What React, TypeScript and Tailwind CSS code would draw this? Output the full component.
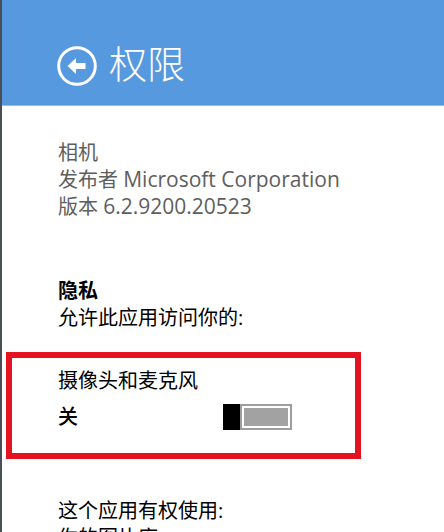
export default function App() {
  const font = { fontFamily: '"Open Sans", "Noto Sans CJK SC", sans-serif' };

  return (
    <div
      className="h-[532px] w-[444px] overflow-hidden border-l-2 border-[#4a4f57] bg-white"
      style={font}
    >
      <header className="flex h-[106px] items-start border-b border-[#8cc0f0] bg-[#5699de] pl-[55px] pt-[46px]">
        <div className="flex h-[40px] items-center gap-[12px]">
          <svg width="40" height="40" viewBox="0 0 40 40" aria-hidden>
            <circle cx="20" cy="20" r="18.3" fill="none" stroke="#fff" strokeWidth="3" />
            <path d="M10.5 20 L19 12 L19 17 L28.5 17 L28.5 23 L19 23 L19 28 Z" fill="#fff" />
          </svg>
          <h1 className="mb-[6px] text-[38px] font-light leading-[38px] text-white">权限</h1>
        </div>
      </header>

      <main className="text-[20px] leading-[27px]">
        <section className="pl-[56px] pt-[33px] text-[#5e5e5e]">
          <p>相机</p>
          <p>
            发布者 <span className="text-[21px]">Microsoft Corporation</span>
          </p>
          <p>
            版本 <span className="text-[21px]">6.2.9200.20523</span>
          </p>
        </section>

        <section className="pl-[56px] pt-[57px] text-black">
          <p className="font-bold">隐私</p>
          <p>允许此应用访问你的:</p>
        </section>

        <div className="ml-[4px] mt-[21px] h-[107px] w-[355px] border-[6px] border-[#e3141f] pl-[46px] pt-[9px] text-black">
          <p>摄像头和麦克风</p>
          <div className="mt-[9px] flex items-center">
            <span className="w-[165px] font-medium">关</span>
            <div className="flex h-[26px] w-[69px]">
              <div className="h-full w-[17px] bg-black" />
              <div className="h-full flex-1 border-2 border-[#9d9d9d] bg-white p-[2px]">
                <div className="h-full w-full bg-[#a2a2a2]" />
              </div>
            </div>
          </div>
        </div>

        <section className="pl-[56px] pt-[38px] text-black">
          <p>这个应用有权使用:</p>
          <p>你的图片库</p>
        </section>
      </main>
    </div>
  );
}
